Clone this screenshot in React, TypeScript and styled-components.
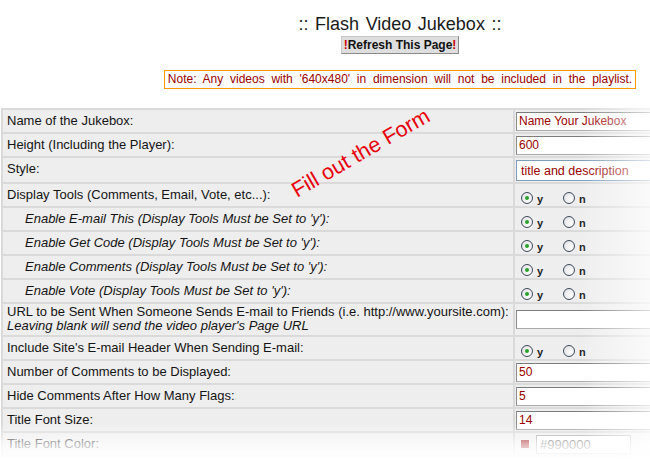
import React, {FC} from 'react';
import styled, {createGlobalStyle} from 'styled-components';

type Field =
    | {kind: 'text'; value: string}
    | {kind: 'select'; value: string}
    | {kind: 'radio'; checked: 'y' | 'n'}
    | {kind: 'color'; value: string};

interface Row {
    label: string;
    note?: string;
    sub?: boolean;
    field: Field;
}

const rows: Row[] = [
    {label: 'Name of the Jukebox:', field: {kind: 'text', value: 'Name Your Jukebox'}},
    {label: 'Height (Including the Player):', field: {kind: 'text', value: '600'}},
    {label: 'Style:', field: {kind: 'select', value: 'title and description'}},
    {label: 'Display Tools (Comments, Email, Vote, etc...):', field: {kind: 'radio', checked: 'y'}},
    {label: "Enable E-mail This (Display Tools Must be Set to 'y'):", sub: true, field: {kind: 'radio', checked: 'y'}},
    {label: "Enable Get Code (Display Tools Must be Set to 'y'):", sub: true, field: {kind: 'radio', checked: 'y'}},
    {label: "Enable Comments (Display Tools Must be Set to 'y'):", sub: true, field: {kind: 'radio', checked: 'y'}},
    {label: "Enable Vote (Display Tools Must be Set to 'y'):", sub: true, field: {kind: 'radio', checked: 'y'}},
    {
        label: 'URL to be Sent When Someone Sends E-mail to Friends (i.e. http://www.yoursite.com):',
        note: "Leaving blank will send the video player's Page URL",
        field: {kind: 'text', value: ''}
    },
    {label: "Include Site's E-mail Header When Sending E-mail:", field: {kind: 'radio', checked: 'y'}},
    {label: 'Number of Comments to be Displayed:', field: {kind: 'text', value: '50'}},
    {label: 'Hide Comments After How Many Flags:', field: {kind: 'text', value: '5'}},
    {label: 'Title Font Size:', field: {kind: 'text', value: '14'}},
    {label: 'Title Font Color:', field: {kind: 'color', value: '#990000'}},
];

const GlobalStyle = createGlobalStyle`
  html, body {
    margin: 0;
    padding: 0;
    background: #fff;
    overflow: hidden;
  }
  body {
    font-family: "Liberation Sans", Arial, sans-serif;
    color: #111;
  }
`;

const RadioPair: FC<{checked: 'y' | 'n'}> = ({checked}) => (
    <RadioGroup>
        <RadioOption>
            <RadioDot $on={checked === 'y'}/>
            <RadioText>y</RadioText>
        </RadioOption>
        <RadioOption>
            <RadioDot $on={checked === 'n'}/>
            <RadioText>n</RadioText>
        </RadioOption>
    </RadioGroup>
);

const renderField = (field: Field) => {
    switch (field.kind) {
        case 'text':
            return <TextInput defaultValue={field.value}/>;
        case 'select':
            return <SelectBox>{field.value}</SelectBox>;
        case 'radio':
            return <RadioPair checked={field.checked}/>;
        case 'color':
            return (
                <ColorPick>
                    <Swatch/>
                    <ColorInput defaultValue={field.value}/>
                </ColorPick>
            );
    }
};

const rowHeight = (row: Row) => (row.note ? 31 : row.field.kind === 'select' ? 24 : 22);

const App: FC = () => {
    return (
        <Page>
            <GlobalStyle/>
            <Header>
                <Title>:: Flash Video Jukebox ::</Title>
                <RefreshButton>
                    <Bang>!</Bang>Refresh This Page<Bang>!</Bang>
                </RefreshButton>
                <Note>Note: Any videos with '640x480' in dimension will not be included in the playlist.</Note>
            </Header>
            <FormTable>
                <tbody>
                {rows.map((row) => (
                    <FormRow key={row.label} $h={rowHeight(row)}>
                        <LabelCell $sub={row.sub} $tall={!!row.note}>
                            {row.label}
                            {row.note && <Hint>{row.note}</Hint>}
                        </LabelCell>
                        <FieldCell>{renderField(row.field)}</FieldCell>
                    </FormRow>
                ))}
                </tbody>
            </FormTable>
            <Scribble>Fill out the Form</Scribble>
            <RightFade/>
            <BottomFade/>
        </Page>
    );
};

const Page = styled.div`
  position: relative;
  width: 800px;
  height: 466px;
  overflow: hidden;
`;

const Header = styled.div`
  display: flex;
  flex-direction: column;
  align-items: center;
  padding-top: 14px;
`;

const Title = styled.div`
  font-size: 18px;
  line-height: 20px;
  word-spacing: 1.5px;
  color: #1a1a1a;
`;

const RefreshButton = styled.button`
  margin-top: 2px;
  font-family: "Liberation Sans", Arial, sans-serif;
  font-size: 12px;
  font-weight: bold;
  line-height: 14px;
  color: #111;
  background: #dedede;
  border: 1px solid #8a8a8a;
  border-top-color: #c8c8c8;
  border-left-color: #c8c8c8;
  padding: 1px 2px;
`;

const Bang = styled.span`
  color: #d00000;
`;

const Note = styled.div`
  margin-top: 16px;
  font-size: 12px;
  line-height: 15px;
  word-spacing: 3.4px;
  color: #990000;
  border: 1px solid #ff9900;
  padding: 1px 3px;
`;

const FormTable = styled.table`
  margin: 19px 0 0 1px;
  width: 798px;
  border-spacing: 2px;
  background: #dadada;
`;

const FormRow = styled.tr<{$h: number}>`
  height: ${p => p.$h}px;
`;

const LabelCell = styled.td<{$sub?: boolean; $tall?: boolean}>`
  box-sizing: border-box;
  width: 510px;
  padding: ${p => (p.$tall ? '1px 4px 0' : '3px 4px 0')};
  padding-left: ${p => (p.$sub ? 22 : 4)}px;
  vertical-align: top;
  background: #eeeeee;
  font-size: 13px;
  line-height: ${p => (p.$tall ? 14 : 15)}px;
  font-style: ${p => (p.$sub ? 'italic' : 'normal')};
  white-space: nowrap;
  color: #141414;
`;

const Hint = styled.div`
  font-style: italic;
`;

const FieldCell = styled.td`
  box-sizing: border-box;
  padding: 1px;
  vertical-align: middle;
  background: #eeeeee;
`;

const TextInput = styled.input`
  box-sizing: border-box;
  display: block;
  width: 260px;
  height: 19px;
  margin: 0;
  padding: 0 2px;
  font-family: "Liberation Sans", Arial, sans-serif;
  font-size: 12px;
  color: #990000;
  background: #fff;
  border: 1px solid #a8a8a8;
  border-top-color: #7c7c7c;
  border-left-color: #8c8c8c;
  outline: none;
`;

const SelectBox = styled.div`
  box-sizing: border-box;
  width: 260px;
  height: 21px;
  padding: 3px 4px 0;
  font-size: 12.5px;
  line-height: 15px;
  color: #990000;
  background: #fff;
  border: 1px solid #7f9db9;
`;

const RadioGroup = styled.div`
  box-sizing: border-box;
  display: flex;
  gap: 7px;
  padding: 5px 0 0 5px;
  height: 20px;
`;

const RadioOption = styled.label`
  display: flex;
  align-items: center;
  gap: 4px;
  width: 35px;
`;

const RadioDot = styled.span<{$on: boolean}>`
  box-sizing: border-box;
  position: relative;
  width: 12px;
  height: 12px;
  border-radius: 50%;
  border: 1px solid #3f4b5e;
  background: radial-gradient(circle at 65% 65%, #ffffff 0%, #e4e4e4 75%, #d2d2d2 100%);

  &::after {
    content: '';
    display: ${p => (p.$on ? 'block' : 'none')};
    position: absolute;
    left: 3px;
    top: 3px;
    width: 4px;
    height: 4px;
    border-radius: 50%;
    background: #2aa02a;
  }
`;

const RadioText = styled.span`
  font-size: 11px;
  font-weight: bold;
  line-height: 12px;
  margin-top: 3px;
  color: #222;
`;

const ColorPick = styled.div`
  display: flex;
  align-items: center;
  gap: 7px;
  padding-left: 5px;
`;

const Swatch = styled.span`
  width: 8px;
  height: 8px;
  background: #990000;
`;

const ColorInput = styled.input`
  box-sizing: border-box;
  width: 95px;
  height: 19px;
  padding: 0 3px;
  font-family: "Liberation Sans", Arial, sans-serif;
  font-size: 13px;
  color: #555;
  border: 1px solid #a8a8a8;
  background: #fff;
`;

const Scribble = styled.div`
  position: absolute;
  left: 283px;
  top: 141px;
  font-size: 21.5px;
  line-height: 24px;
  color: #e8000b;
  white-space: nowrap;
  transform: rotate(-30deg);
  transform-origin: center;
  pointer-events: none;
`;

const RightFade = styled.div`
  position: absolute;
  left: 580px;
  top: 100px;
  width: 70px;
  height: 366px;
  background: linear-gradient(to right, rgba(255, 255, 255, 0) 0%, rgba(255, 255, 255, 0.72) 100%);
  pointer-events: none;
`;

const BottomFade = styled.div`
  position: absolute;
  left: 0;
  top: 424px;
  width: 100%;
  height: 42px;
  background: linear-gradient(to bottom, rgba(255, 255, 255, 0) 0%, rgba(255, 255, 255, 0.72) 50%, #fff 85%);
  pointer-events: none;
`;

export default App;
